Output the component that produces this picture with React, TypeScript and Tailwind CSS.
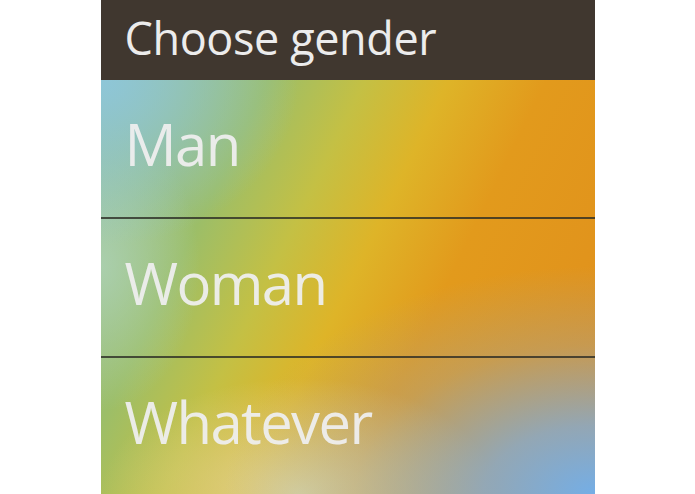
const options = ['Man', 'Woman', 'Whatever']

export default function App() {
  return (
    <div className="min-h-screen bg-white">
      <div
        className="mx-auto flex h-[494px] w-[494px] flex-col"
        style={{ fontFamily: '"Open Sans", "Noto Sans", sans-serif' }}
      >
        {/* Header */}
        <div className="h-[80px] shrink-0 bg-[#40372f] pl-[24px] pt-[16px] text-[45px] font-medium leading-[44px] tracking-[-0.4px] text-[#ececec]">
          Choose gender
        </div>

        {/* Gradient list */}
        <div className="flex flex-1 flex-col bg-[radial-gradient(ellipse_75%_55%_at_100%_100%,#74aee6_0%,rgba(128,172,218,0.8)_30%,rgba(150,168,180,0.35)_65%,rgba(150,168,180,0)_100%),radial-gradient(ellipse_40%_28%_at_40%_100%,rgba(222,214,160,0.95)_0%,rgba(222,214,160,0)_100%),radial-gradient(ellipse_40%_40%_at_0%_0%,#8ec6d8_0%,rgba(142,198,216,0)_100%),radial-gradient(ellipse_20%_35%_at_0%_45%,rgba(176,212,186,0.75)_0%,rgba(176,212,186,0)_100%),linear-gradient(116deg,#94c0a8_0%,#9cbe68_24%,#c4c044_38%,#deb428_50%,#e29a1c_64%,#e08e1c_100%)]">
          {options.map((label, i) => (
            <div
              key={label}
              className={i < options.length - 1 ? 'flex h-[139px] flex-col' : 'flex flex-1 flex-col'}
            >
              <div className="flex-1 pl-[24px] pt-[34px] text-[58px] leading-[60px] tracking-[-1.6px] text-[#eeeeee]/95">
                {label}
              </div>
              {i < options.length - 1 && (
                <div className="h-[2px] bg-[#2c2c24]/80" />
              )}
            </div>
          ))}
        </div>
      </div>
    </div>
  )
}
